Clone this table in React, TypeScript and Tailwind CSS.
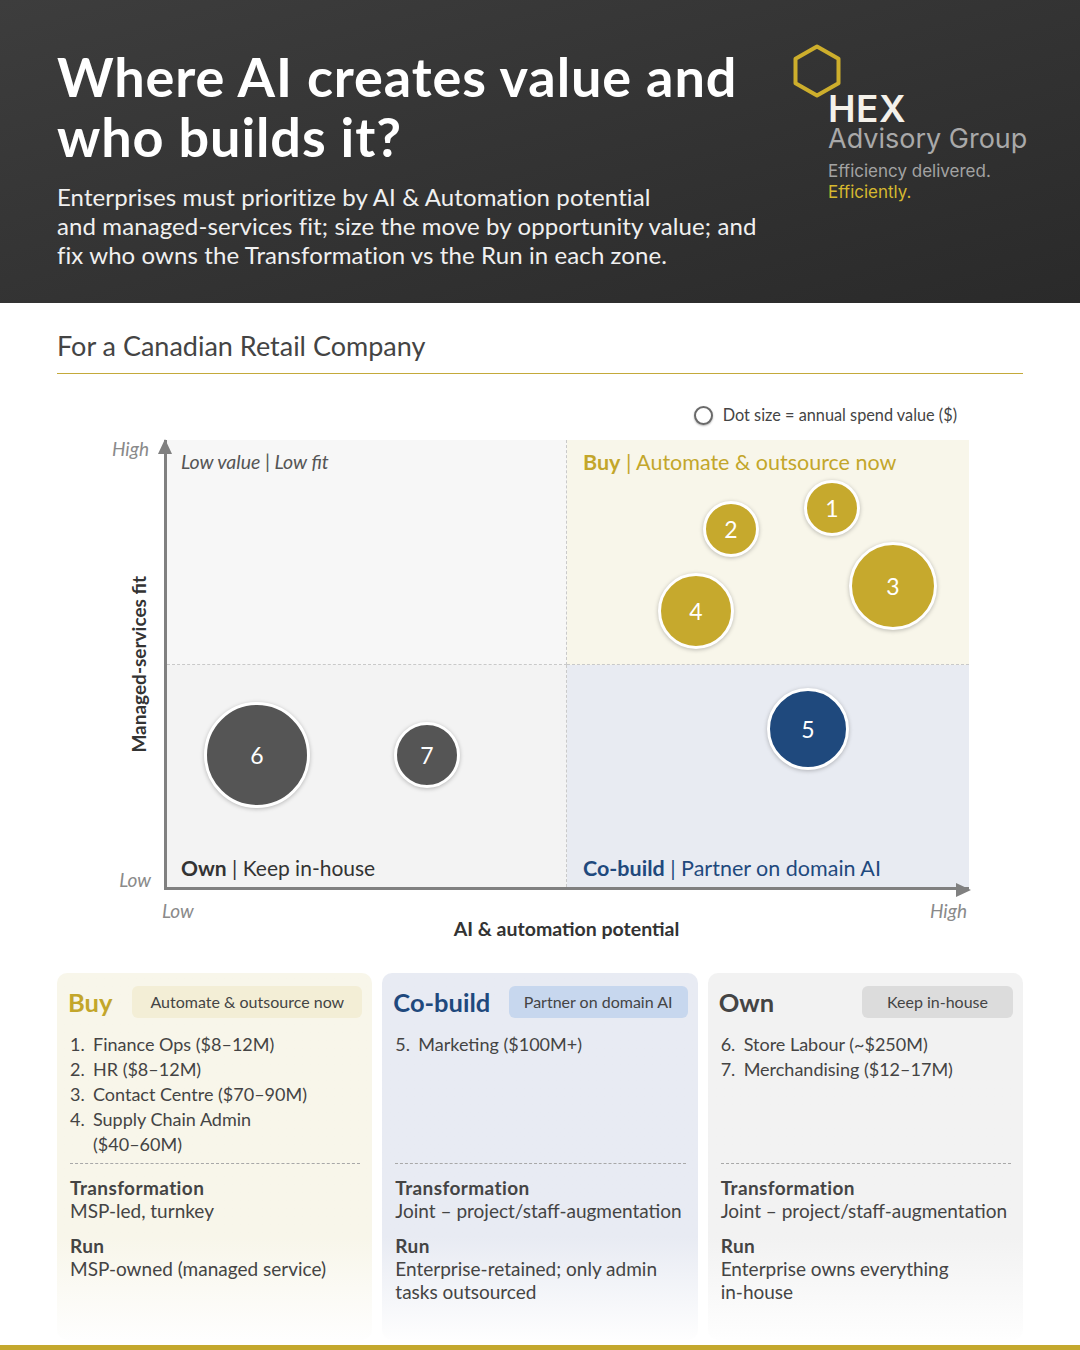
import React from 'react';

const BODY = "font-['Lato','Open_Sans',sans-serif]";

type Dot = { n: number; x: number; y: number; d: number; tone: 'gold' | 'navy' | 'dark' };

// positions are relative to the plot origin (inside the axis lines)
const DOTS: Dot[] = [
  { n: 1, x: 665, y: 68, d: 56, tone: 'gold' },
  { n: 2, x: 564, y: 89, d: 56, tone: 'gold' },
  { n: 3, x: 726, y: 146, d: 88, tone: 'gold' },
  { n: 4, x: 529, y: 171, d: 76, tone: 'gold' },
  { n: 5, x: 641, y: 289, d: 82, tone: 'navy' },
  { n: 6, x: 90, y: 315, d: 106, tone: 'dark' },
  { n: 7, x: 260, y: 315, d: 66, tone: 'dark' },
];

const TONE = {
  gold: 'bg-[#c6a92d]',
  navy: 'bg-[#1f497d]',
  dark: 'bg-[#555555]',
};

const HexLogo = () => (
  <div className="flex flex-col">
    <svg width="48" height="54" viewBox="0 0 48 54" className="block">
      <polygon
        points="24,2.5 45.5,14.8 45.5,39.2 24,51.5 2.5,39.2 2.5,14.8"
        fill="none"
        stroke="#cdae2c"
        strokeWidth="4"
        strokeLinejoin="round"
      />
    </svg>
    <div className="ml-[35px] -mt-[6px] flex flex-col font-['Inter',sans-serif] whitespace-nowrap">
      <span className="text-[37px] leading-[34px] font-semibold text-[#f4f1ea] tracking-[0.5px]">HEX</span>
      <span className="text-[27px] leading-[26px] text-[#a9a9a9]">Advisory Group</span>
      <span className="mt-[8px] text-[17px] leading-[22px] text-[#a3a3a3]">Efficiency delivered.</span>
      <span className="-mt-[1px] text-[17px] leading-[22px] text-[#d6b82f]">Efficiently.</span>
    </div>
  </div>
);

const Header = () => (
  <header className="h-[303px] bg-linear-to-br from-[#3d3d3d] to-[#2a2a2a] flex pl-[57px] pt-[44px]">
    <div className={`w-[736px] ${BODY}`}>
      <h1 className="mt-[3px] text-[54px] leading-[60px] font-bold text-white whitespace-nowrap tracking-[0.9px]">
        Where AI creates value and
        <br />
        who builds it?
      </h1>
      <p className="mt-[15px] text-[24px] leading-[29px] text-[#f0f0f0] whitespace-nowrap tracking-[0.1px]">
        Enterprises must prioritize by AI &amp; Automation potential
        <br />
        and managed-services fit; size the move by opportunity value; and
        <br />
        fix who owns the Transformation vs the Run in each zone.
      </p>
    </div>
    <HexLogo />
  </header>
);

const Chart = () => (
  <div className={`${BODY} grid grid-cols-[107px_805px]`}>
    {/* y-axis labels */}
    <div className="h-[450px] flex flex-col items-end justify-between pr-[15px]">
      <span className="mt-[-2px] text-[19px] leading-[22px] italic text-[#8a8a8a]">High</span>
      <span className="[writing-mode:vertical-rl] rotate-180 text-[19px] leading-[20px] font-bold text-[#333] whitespace-nowrap pr-[2px]">
        Managed-services fit
      </span>
      <span className="mb-[-1px] text-[19px] leading-[22px] italic text-[#8a8a8a] mr-[-2px]">Low</span>
    </div>

    {/* plot */}
    <div className="relative h-[450px] border-l-[3px] border-b-[3px] border-[#808080]">
      <div className="grid h-full grid-cols-[400px_402px] grid-rows-[225px_222px]">
        <div className="bg-[#f7f7f7] border-r border-b border-dashed border-[#c9c9c9] pl-[14px] pt-[9px]">
          <span className="text-[19.5px] leading-[26px] italic text-[#555]">Low value | Low fit</span>
        </div>
        <div className="bg-[#f8f6ea] border-b border-dashed border-[#c9c9c9] pl-[16px] pt-[8px]">
          <span className="text-[21.5px] leading-[28px] text-[#c3a62b]">
            <b className="font-bold">Buy</b> | Automate &amp; outsource now
          </span>
        </div>
        <div className="bg-[#f3f3f3] border-r border-dashed border-[#c9c9c9] pl-[14px] pb-[5px] flex items-end">
          <span className="text-[21px] leading-[28px] text-[#333]">
            <b className="font-bold">Own</b> | Keep in-house
          </span>
        </div>
        <div className="bg-[#e8ebf2] pl-[16px] pb-[5px] flex items-end">
          <span className="text-[21.5px] leading-[28px] text-[#1f497d]">
            <b className="font-bold">Co-build</b> | Partner on domain AI
          </span>
        </div>
      </div>

      {DOTS.map((dot) => (
        <div
          key={dot.n}
          className={`absolute rounded-full border-[3px] border-white shadow-[0_1px_4px_rgba(0,0,0,0.25)] flex items-center justify-center text-white text-[23px] ${TONE[dot.tone]}`}
          style={{ left: dot.x - dot.d / 2, top: dot.y - dot.d / 2, width: dot.d, height: dot.d }}
        >
          {dot.n}
        </div>
      ))}

      {/* arrow heads */}
      <div className="absolute -left-[9px] -top-[1px] w-0 h-0 border-l-[7px] border-r-[7px] border-b-[15px] border-l-transparent border-r-transparent border-b-[#808080]" />
      <div className="absolute -right-[2px] -bottom-[10px] w-0 h-0 border-t-[7px] border-b-[7px] border-l-[15px] border-t-transparent border-b-transparent border-l-[#808080]" />
    </div>

    <div />
    <div className="pt-[11px]">
      <div className="flex justify-between text-[19px] leading-[20px] italic text-[#8a8a8a] pr-[2px]">
        <span className="-ml-[2px]">Low</span>
        <span>High</span>
      </div>
      <div className="text-center text-[19.5px] leading-[22px] font-bold text-[#333] -mt-[3px]">
        AI &amp; automation potential
      </div>
    </div>
  </div>
);

type Card = {
  title: string;
  titleColor: string;
  pill: string;
  pillClass: string;
  bg: string;
  items: React.ReactNode[];
  start: number;
  transformation: string;
  run: React.ReactNode;
};

const CARDS: Card[] = [
  {
    title: 'Buy',
    titleColor: 'text-[#c3a62b]',
    pill: 'Automate & outsource now',
    pillClass: 'w-[230px] bg-[#f3eed6]',
    bg: 'from-[#f8f6ea]',
    items: [
      'Finance Ops ($8–12M)',
      'HR ($8–12M)',
      'Contact Centre ($70–90M)',
      <>
        Supply Chain Admin
        <br />
        ($40–60M)
      </>,
    ],
    start: 1,
    transformation: 'MSP-led, turnkey',
    run: 'MSP-owned (managed service)',
  },
  {
    title: 'Co-build',
    titleColor: 'text-[#1f497d]',
    pill: 'Partner on domain AI',
    pillClass: 'w-[179px] bg-[#c7d7ee]',
    bg: 'from-[#e8ebf3]',
    items: ['Marketing ($100M+)'],
    start: 5,
    transformation: 'Joint – project/staff-augmentation',
    run: (
      <>
        Enterprise-retained; only admin
        <br />
        tasks outsourced
      </>
    ),
  },
  {
    title: 'Own',
    titleColor: 'text-[#444]',
    pill: 'Keep in-house',
    pillClass: 'w-[151px] bg-[#dcdcdc]',
    bg: 'from-[#f2f2f2]',
    items: ['Store Labour (~$250M)', 'Merchandising ($12–17M)'],
    start: 6,
    transformation: 'Joint – project/staff-augmentation',
    run: (
      <>
        Enterprise owns everything
        <br />
        in-house
      </>
    ),
  },
];

const ZoneCard = ({ card }: { card: Card }) => (
  <div className={`h-[367px] rounded-[10px] bg-linear-to-b ${card.bg} from-[72%] to-[#fefefe] pt-[13px] ${BODY}`}>
    <div className="flex items-center justify-between pl-[11px] pr-[10px]">
      <span className={`text-[25.5px] leading-[32px] font-bold ${card.titleColor}`}>{card.title}</span>
      <span className={`h-[32px] rounded-[6px] flex items-center justify-center text-[16px] text-[#444] ${card.pillClass}`}>
        {card.pill}
      </span>
    </div>

    <ol className="h-[131px] mt-[14px] pl-[13px] text-[18px] leading-[25px] text-[#444]">
      {card.items.map((item, i) => (
        <li key={i} className="flex whitespace-nowrap">
          <span className="w-[23px] shrink-0">{card.start + i}.</span>
          <span>{item}</span>
        </li>
      ))}
    </ol>

    <div className="ml-[13px] mr-[12px] border-t border-dashed border-[#a8a8a8]" />

    <div className="mt-[12px] pl-[13px] text-[19px] leading-[23px] text-[#444] whitespace-nowrap">
      <div className="font-bold tracking-[0.4px]">Transformation</div>
      <div>{card.transformation}</div>
      <div className="mt-[12px] font-bold tracking-[0.4px]">Run</div>
      <div>{card.run}</div>
    </div>
  </div>
);

export default function App() {
  return (
    <div className="w-[1080px] h-[1350px] bg-white overflow-hidden">
      <Header />

      <main className="px-[57px]">
        <h2 className={`pt-[26px] pb-[10px] text-[27px] leading-[34px] text-[#444] border-b border-[#c4aa3a] ${BODY}`}>
          For a Canadian Retail Company
        </h2>

        <div className={`mt-[31px] flex items-center justify-end gap-[10px] pr-[66px] ${BODY}`}>
          <span className="w-[19px] h-[19px] rounded-full border-2 border-[#6a6a6a] bg-white shadow-[0_1px_2px_rgba(0,0,0,0.3)]" />
          <span className="text-[16.3px] leading-[20px] text-[#444]">Dot size = annual spend value ($)</span>
        </div>

        <div className="mt-[15px]">
          <Chart />
        </div>

        <div className="mt-[33px] grid grid-cols-3 gap-[10px]">
          {CARDS.map((card) => (
            <ZoneCard key={card.title} card={card} />
          ))}
        </div>
      </main>

      <div className="mt-[5px] h-[5px] bg-[#c4a82e]" />
    </div>
  );
}
